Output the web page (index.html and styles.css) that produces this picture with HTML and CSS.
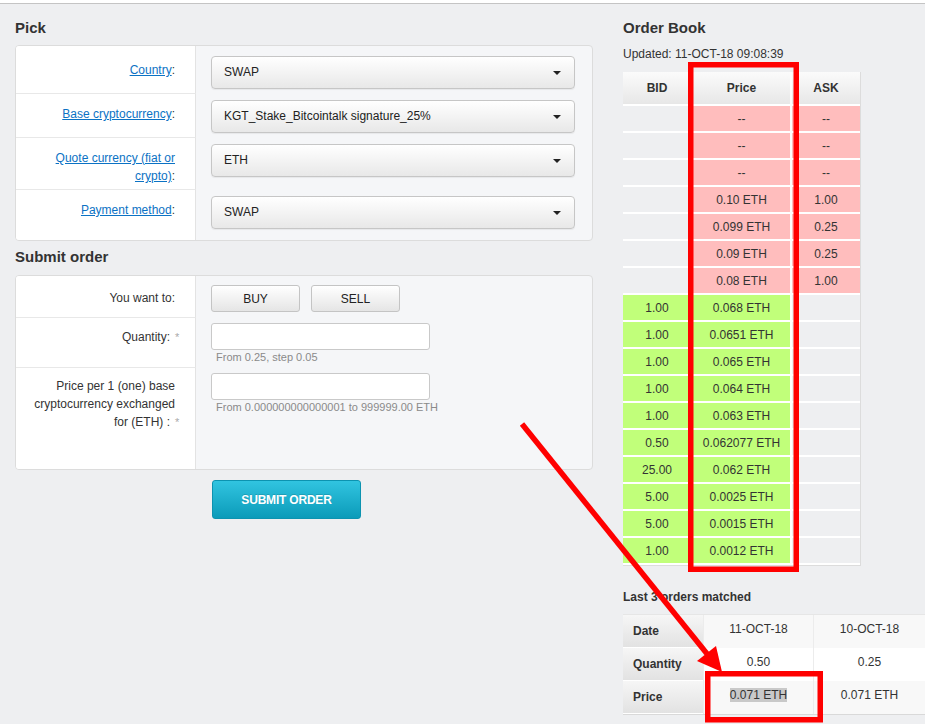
FILE: index.html
```html
<!DOCTYPE html>
<html>
<head>
<meta charset="utf-8" />
<title>Order Book</title>
<link rel="stylesheet" href="styles.css">
</head>

<body>
<div class="page">
  <div class="topbar"></div>
  <div class="columns">

    <div class="left">
      <h2>Pick</h2>
      <div class="panel pick">
        <div class="label first"><a href="#">Country</a>:</div>
        <div class="field first"><div class="select">SWAP</div></div>

        <div class="label"><a href="#">Base cryptocurrency</a>:</div>
        <div class="field"><div class="select">KGT_Stake_Bitcointalk signature_25%</div></div>

        <div class="label"><a href="#">Quote currency (fiat or</a><br /><a href="#">crypto)</a>:</div>
        <div class="field"><div class="select">ETH</div></div>

        <div class="label last"><a href="#">Payment method</a>:</div>
        <div class="field"><div class="select">SWAP</div></div>
      </div>

      <h2 class="second">Submit order</h2>
      <div class="panel submit">
        <div class="label want">You want to:</div>
        <div class="field buttons">
          <button class="btn">BUY</button>
          <button class="btn">SELL</button>
        </div>

        <div class="label qty">Quantity:<span class="req">*</span></div>
        <div class="field inputs">
          <input type="text" class="text" />
          <div class="hint">From 0.25, step 0.05</div>
        </div>

        <div class="label last price">Price per 1 (one) base<br />cryptocurrency exchanged<br />for (ETH) :<span class="req">*</span></div>
        <div class="field inputs">
          <input type="text" class="text" />
          <div class="hint">From 0.000000000000001 to 999999.00 ETH</div>
        </div>
      </div>

      <button class="submit-btn">SUBMIT ORDER</button>
    </div>

    <div class="right">
      <h2>Order Book</h2>
      <div class="updated">Updated: 11-OCT-18 09:08:39</div>

      <table class="book">
        <tr><th class="c1">BID</th><th class="c2">Price</th><th class="c3">ASK</th></tr>
        <tr><td></td><td class="ask">--</td><td class="ask">--</td></tr>
        <tr><td></td><td class="ask">--</td><td class="ask">--</td></tr>
        <tr><td></td><td class="ask">--</td><td class="ask">--</td></tr>
        <tr><td></td><td class="ask">0.10 ETH</td><td class="ask">1.00</td></tr>
        <tr><td></td><td class="ask">0.099 ETH</td><td class="ask">0.25</td></tr>
        <tr><td></td><td class="ask">0.09 ETH</td><td class="ask">0.25</td></tr>
        <tr><td></td><td class="ask">0.08 ETH</td><td class="ask">1.00</td></tr>
        <tr><td class="bid">1.00</td><td class="bid">0.068 ETH</td><td></td></tr>
        <tr><td class="bid">1.00</td><td class="bid">0.0651 ETH</td><td></td></tr>
        <tr><td class="bid">1.00</td><td class="bid">0.065 ETH</td><td></td></tr>
        <tr><td class="bid">1.00</td><td class="bid">0.064 ETH</td><td></td></tr>
        <tr><td class="bid">1.00</td><td class="bid">0.063 ETH</td><td></td></tr>
        <tr><td class="bid">0.50</td><td class="bid">0.062077 ETH</td><td></td></tr>
        <tr><td class="bid">25.00</td><td class="bid">0.062 ETH</td><td></td></tr>
        <tr><td class="bid">5.00</td><td class="bid">0.0025 ETH</td><td></td></tr>
        <tr><td class="bid">5.00</td><td class="bid">0.0015 ETH</td><td></td></tr>
        <tr><td class="bid">1.00</td><td class="bid">0.0012 ETH</td><td></td></tr>
      </table>

      <h3>Last 3 orders matched</h3>
      <table class="matched">
        <tr class="odd"><th>Date</th><td>11-OCT-18</td><td>10-OCT-18</td></tr>
        <tr><th>Quantity</th><td>0.50</td><td>0.25</td></tr>
        <tr class="odd"><th>Price</th><td><span class="selected">0.071 ETH</span></td><td>0.071 ETH</td></tr>
      </table>
    </div>

  </div>

  <svg class="marks" width="925" height="724" viewBox="0 0 925 724">
    <rect x="690.75" y="64.75" width="105.5" height="504.5" fill="none" stroke="#ff0000" stroke-width="5.5" />
    <rect x="707.75" y="673.75" width="112.5" height="46" fill="none" stroke="#ff0000" stroke-width="5.5" />
    <line x1="522" y1="424" x2="708" y2="655" stroke="#ff0000" stroke-width="5.5" />
    <polygon points="722,672 697,661 716,646" fill="#ff0000" />
  </svg>
</div>
</body>
</html>
```

FILE: styles.css
```css
* {
  box-sizing: border-box;
}

body {
  margin: 0;
  background: #eeeff1;
  font-family: "Liberation Sans", Arial, sans-serif;
  font-size: 12px;
  color: #333;
}

.page {
  position: relative;
  height: 724px;
  overflow: hidden;
}

.topbar {
  height: 4px;
  background: #fff;
  border-bottom: 1px solid #c4c4c4;
}

.columns {
  display: flex;
  gap: 30px;
  padding-left: 15px;
}

.left {
  width: 578px;
  flex: none;
}

.right {
  width: 302px;
  flex: none;
  overflow: hidden;
}

h2 {
  margin: 15px 0 8px;
  font-size: 15px;
  line-height: 18px;
  font-weight: bold;
  color: #333;
}

h2.second {
  margin: 7px 0 9px;
}

/* form panels */

.panel {
  display: grid;
  grid-template-columns: 180px 1fr;
  background: #f5f6f8;
  border: 1px solid #dcdcdc;
  border-radius: 4px;
  overflow: hidden;
}

.pick {
  grid-template-rows: 48px 44px 52px 50px;
}

.submit {
  grid-template-rows: 42px 50px 101px;
}

.label {
  background: #fff;
  text-align: right;
  line-height: 18px;
  padding: 11px 20px 0 10px;
  border-right: 1px solid #e3e3e3;
  border-bottom: 1px solid #e8e8e8;
}

.label.first { padding-top: 15px; }
.label.last { border-bottom: 0; }
.label.want { padding-top: 13px; }
.label.qty { padding-top: 10px; }
.label.price { padding-top: 9px; }

.label a {
  color: #0b72c4;
  text-decoration: underline;
}

.req {
  display: inline-block;
  width: 0;
  margin-left: 5px;
  color: #aaa;
  font-size: 11px;
}

.field {
  padding: 6px 17px 0 15px;
}

.field.first { padding-top: 10px; }
.field.buttons { padding-top: 9px; display: flex; gap: 11px; }
.field.inputs { padding-top: 5px; }

.select {
  position: relative;
  height: 33px;
  line-height: 31px;
  padding-left: 12px;
  border: 1px solid #c6c6c6;
  border-radius: 4px;
  background: linear-gradient(#ffffff, #e8e8e8);
  box-shadow: 0 1px 1px rgba(0, 0, 0, 0.06);
  font-size: 12px;
  color: #222;
}

.select::after {
  content: "";
  position: absolute;
  right: 13px;
  top: 14px;
  border-left: 4px solid transparent;
  border-right: 4px solid transparent;
  border-top: 4px solid #222;
}

.btn {
  width: 89px;
  height: 27px;
  border: 1px solid #c4c4c4;
  border-radius: 3px;
  background: linear-gradient(#ffffff, #e5e5e5);
  font-family: "Liberation Sans", Arial, sans-serif;
  font-size: 12px;
  color: #222;
  padding: 0;
}

.text {
  display: block;
  width: 219px;
  height: 27px;
  border: 1px solid #c9c9c9;
  border-radius: 3px;
  background: #fff;
  margin: 0;
}

.hint {
  margin-left: 5px;
  font-size: 11px;
  line-height: 14px;
  color: #8a8a8a;
}

.submit-btn {
  display: block;
  margin: 10px 0 0 197px;
  width: 149px;
  height: 39px;
  border: 1px solid #0c93b0;
  border-radius: 3px;
  background: linear-gradient(#31c4e0, #0b9bb9);
  color: #fff;
  font-family: "Liberation Sans", Arial, sans-serif;
  font-size: 12px;
  font-weight: bold;
  letter-spacing: -0.2px;
  text-shadow: 0 -1px 0 rgba(0, 0, 0, 0.15);
}

/* order book */

.updated {
  margin: 8px 0 9px;
  line-height: 18px;
  font-size: 12px;
}

.book {
  border-collapse: separate;
  border-spacing: 0;
  width: 238px;
  border-right: 1px solid #dcdcdc;
  border-bottom: 1px solid #dcdcdc;
  font-size: 12px;
}

.book th {
  height: 34px;
  padding: 0;
  background: linear-gradient(#fbfbfb, #e7e7e7);
  font-weight: bold;
  border-right: 2px solid #fff;
  border-bottom: 2px solid #fff;
}

.book td {
  height: 27px;
  padding: 0;
  text-align: center;
  border-right: 2px solid #fff;
  border-bottom: 2px solid #fff;
}

.book .c1 { width: 70px; }
.book .c2 { width: 99px; }
.book .c3 { width: 68px; }

.book tr th:last-child,
.book tr td:last-child {
  border-right: 0;
}

.book .ask { background: #ffbdbd; }
.book .bid { background: #c1ff7a; }

h3 {
  margin: 22px 0 8px;
  font-size: 12px;
  line-height: 18px;
  font-weight: bold;
}

.matched {
  border-collapse: separate;
  border-spacing: 0;
  table-layout: fixed;
  width: 302px;
  font-size: 12px;
  border-top: 1px solid #e6e6e6;
  border-bottom: 1px solid #d9d9d9;
}

.matched th {
  width: 80px;
  height: 33px;
  padding: 0 0 0 10px;
  text-align: left;
  font-weight: bold;
  background: linear-gradient(#f6f6f6, #e2e2e2);
  border-bottom: 1px solid #fff;
}

.matched td {
  width: 110px;
  height: 33px;
  padding: 5px 0 0;
  vertical-align: top;
  text-align: center;
  line-height: 18px;
  background: #fff;
  border-left: 1px solid #ececec;
}

.matched tr td:last-child {
  width: 112px;
}

.matched tr.odd td {
  background: #f8f8f8;
}

.selected {
  background: #c9c9c9;
}

/* annotations drawn over the screenshot */

.marks {
  position: absolute;
  top: 0;
  left: 0;
  pointer-events: none;
}
```
